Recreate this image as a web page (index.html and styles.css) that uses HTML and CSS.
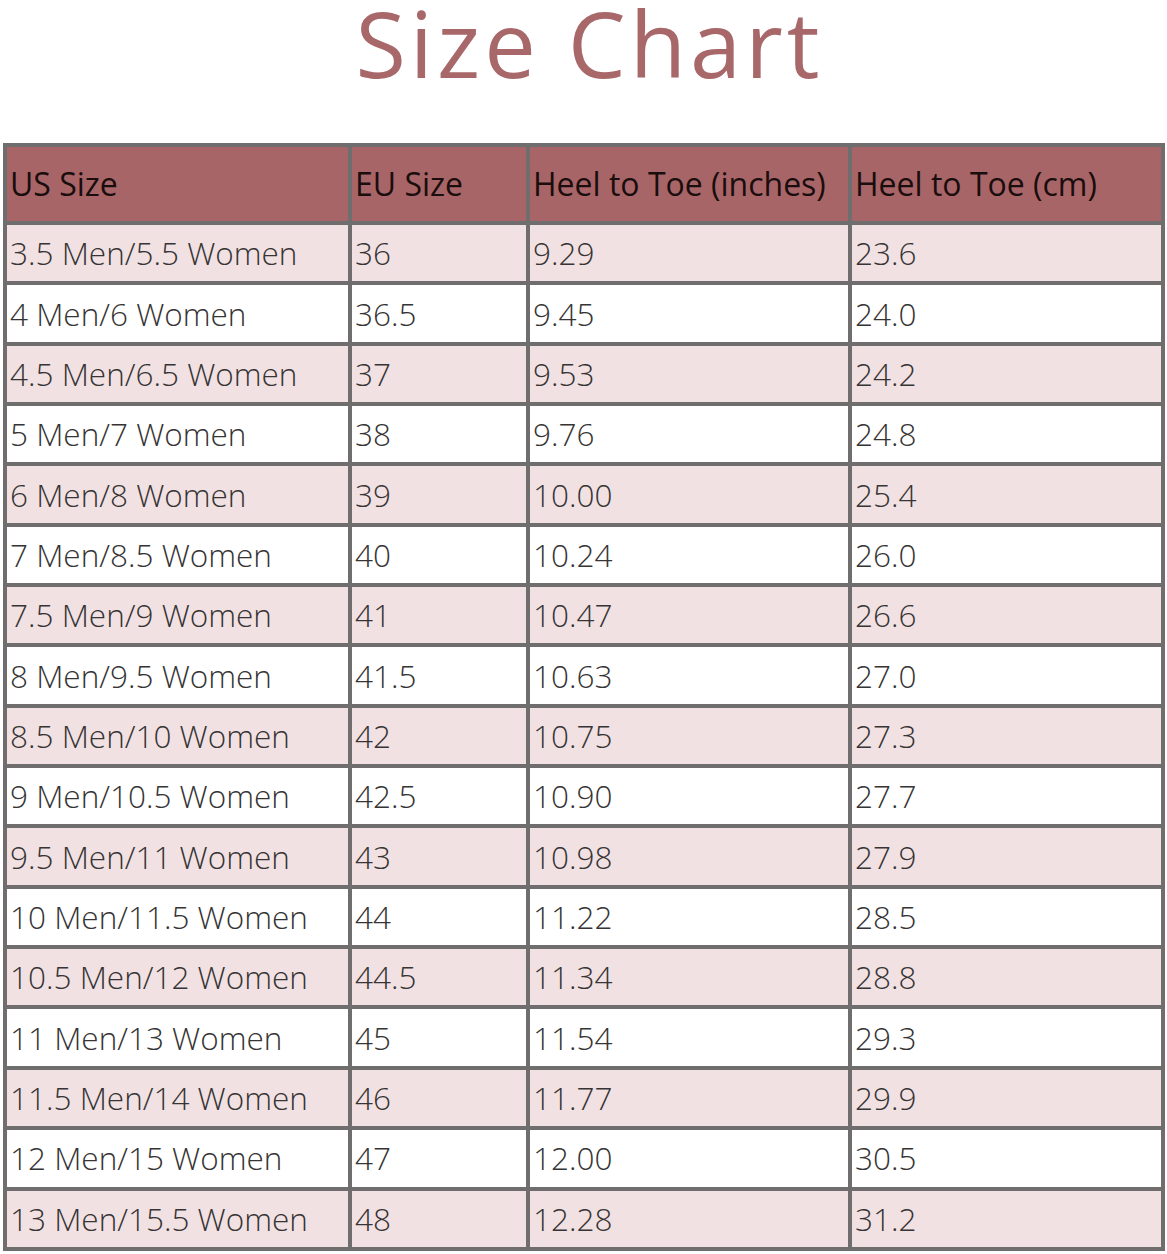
FILE: index.html
```html
<!DOCTYPE html>
<html>
<head>
<meta charset="utf-8">
<link rel="stylesheet" href="styles.css">
</head>
<body>
<h1 class="title">Size Chart</h1>
<table class="chart">
<colgroup>
<col class="c1"><col class="c2"><col class="c3"><col class="c4">
</colgroup>
<thead>
<tr><th>US Size</th><th>EU Size</th><th>Heel to Toe (inches)</th><th>Heel to Toe (cm)</th></tr>
</thead>
<tbody>
<tr><td>3.5 Men/5.5 Women</td><td>36</td><td>9.29</td><td>23.6</td></tr>
<tr><td>4 Men/6 Women</td><td>36.5</td><td>9.45</td><td>24.0</td></tr>
<tr><td>4.5 Men/6.5 Women</td><td>37</td><td>9.53</td><td>24.2</td></tr>
<tr><td>5 Men/7 Women</td><td>38</td><td>9.76</td><td>24.8</td></tr>
<tr><td>6 Men/8 Women</td><td>39</td><td>10.00</td><td>25.4</td></tr>
<tr><td>7 Men/8.5 Women</td><td>40</td><td>10.24</td><td>26.0</td></tr>
<tr><td>7.5 Men/9 Women</td><td>41</td><td>10.47</td><td>26.6</td></tr>
<tr><td>8 Men/9.5 Women</td><td>41.5</td><td>10.63</td><td>27.0</td></tr>
<tr><td>8.5 Men/10 Women</td><td>42</td><td>10.75</td><td>27.3</td></tr>
<tr><td>9 Men/10.5 Women</td><td>42.5</td><td>10.90</td><td>27.7</td></tr>
<tr><td>9.5 Men/11 Women</td><td>43</td><td>10.98</td><td>27.9</td></tr>
<tr><td>10 Men/11.5 Women</td><td>44</td><td>11.22</td><td>28.5</td></tr>
<tr><td>10.5 Men/12 Women</td><td>44.5</td><td>11.34</td><td>28.8</td></tr>
<tr><td>11 Men/13 Women</td><td>45</td><td>11.54</td><td>29.3</td></tr>
<tr><td>11.5 Men/14 Women</td><td>46</td><td>11.77</td><td>29.9</td></tr>
<tr><td>12 Men/15 Women</td><td>47</td><td>12.00</td><td>30.5</td></tr>
<tr><td>13 Men/15.5 Women</td><td>48</td><td>12.28</td><td>31.2</td></tr>
</tbody>
</table>
</body>
</html>
```
FILE: styles.css
```css
html, body {
  margin: 0;
  padding: 0;
  background: #ffffff;
}
body {
  font-family: "Open Sans", "Noto Sans", "DejaVu Sans", sans-serif;
}
.title {
  margin: 0;
  height: 143px;
  padding-top: 0;
  box-sizing: border-box;
  text-align: center;
  font-family: "Open Sans", "Noto Sans", sans-serif;
  font-weight: 400;
  font-size: 92px;
  line-height: 85px;
  color: #a8686a;
  letter-spacing: 4px;
  padding-left: 12px;
}
.chart {
  margin-left: 3px;
  width: 1158px;
  border-collapse: collapse;
  table-layout: fixed;
  border: 4px solid #6f6d6d;
}
.c1 { width: 345px; }
.c2 { width: 178px; }
.c3 { width: 322px; }
.c4 { width: 313px; }
.chart th, .chart td {
  border: 4px solid #6f6d6d;
  text-align: left;
  vertical-align: middle;
  padding: 0 0 0 3px;
  white-space: nowrap;
  overflow: hidden;
  line-height: 1.2;
}
.chart th {
  background: #a86567;
  color: #1a0d0d;
  font-weight: 400;
  font-size: 32px;
  height: 74px;
}
.chart td {
  color: #363434;
  font-weight: 300;
  font-size: 31.5px;
  height: 56.35px;
}
.chart tbody tr:nth-child(odd) td {
  background: #f2e1e2;
}
.chart tbody tr:nth-child(even) td {
  background: #ffffff;
}
```
